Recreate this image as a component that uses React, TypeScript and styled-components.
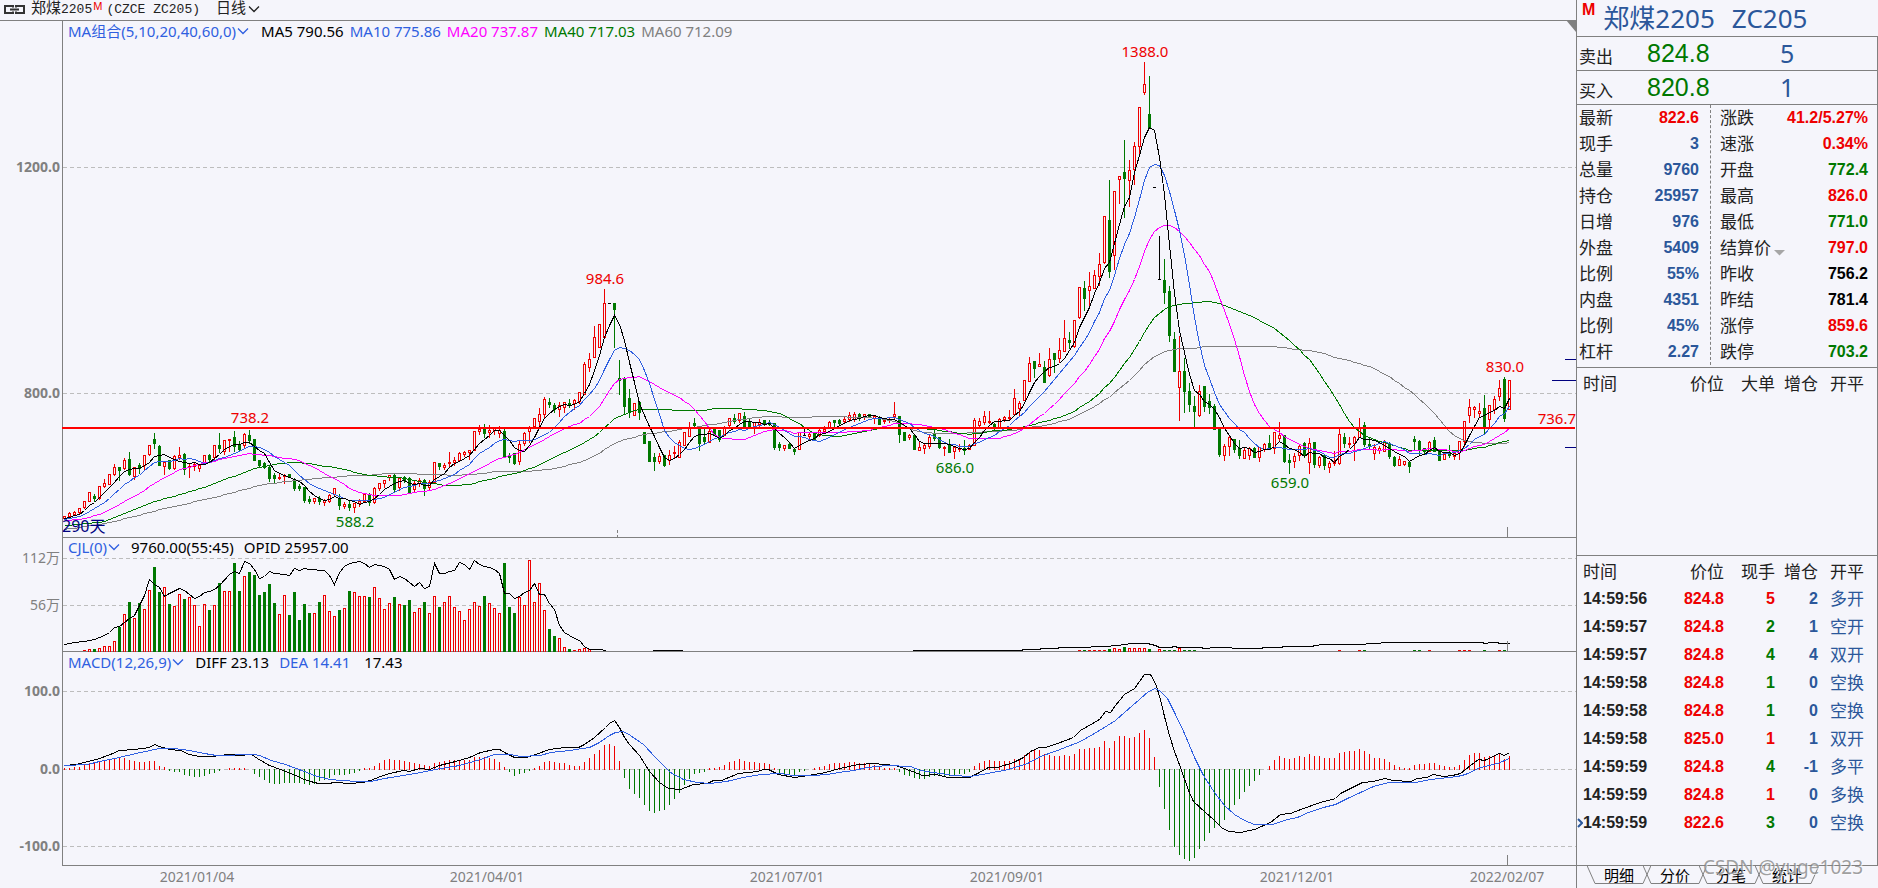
import React from 'react';
import styled, { createGlobalStyle, css } from 'styled-components';

const UP = '#ee0000';
const DOWN = '#007800';
const FLAT = '#000000';
const BLUE = '#2f5fe0';
const NAVY = '#2b579a';
const MAGENTA = '#ff00ff';
const GREY = '#808080';
const GRID = '#bdbdbd';
const BG = '#f5f5fb';
const INK = '#222222';

const UI = '"Noto Sans", "Noto Sans CJK SC", sans-serif';
const NUM = '"Liberation Sans", "Noto Sans CJK SC", sans-serif';
const MONO = '"Liberation Mono", "Noto Sans CJK SC", monospace';

const GlobalStyle = createGlobalStyle`
  * { box-sizing: border-box; }
  body { margin: 0; background: ${BG}; color: ${INK}; font-family: ${UI}; font-size: 14px; }
  button { font: inherit; color: inherit; background: none; border: 0; padding: 0; margin: 0; cursor: pointer; }
`;

/* ---------- chart data (one bar every 5 px) ---------- */

type Kind = 'u' | 'd' | 'f';
interface Candle { kind: Kind; high: number; top: number; bottom: number; low: number }

const CANDLE_SOURCE = `
u515,516,518,519 u511,513,516,517 u510,512,514,515 u507,508,512,513 u500,501,507,508 u492,492,501,501 d493,496,498,501 u485,486,498,499 u478,483,486,487 u473,474,484,484
u463,467,474,475 d466,467,470,480 u457,460,468,469 d451,459,474,475 u466,467,476,479 d462,465,468,473 u454,455,465,469 u445,445,454,455 d432,439,443,448 d444,446,465,465
u460,462,466,474 d459,460,468,469 u454,456,468,469 u446,455,457,459 d452,454,469,474 u463,466,467,477 u462,464,466,470 u463,465,468,471 u455,455,463,463 d453,455,459,462
u445,445,457,459 d432,445,448,452 u439,440,451,454 u438,439,440,451 d430,437,446,451 d440,444,449,450 u432,434,445,448 d429,435,440,443 d439,439,460,460 d459,460,465,466
d461,463,467,468 d465,467,478,481 d472,475,478,483 u473,477,478,479 u473,475,476,483 d473,474,476,477 d477,479,488,490 d483,486,488,490 d486,487,500,502 d495,499,501,503
u497,498,501,503 d495,498,501,504 u498,500,502,505 u493,495,501,502 u488,488,494,495 d493,498,505,509 u501,504,506,508 d500,504,507,510 u502,503,507,512 u498,501,503,506
u492,494,501,501 d492,495,502,505 u486,488,502,503 u483,483,488,490 u480,480,483,487 u474,475,477,480 d473,475,489,491 u477,478,487,490 d475,477,480,482 d476,478,492,492
u480,483,489,491 u477,480,483,486 d478,480,488,495 u479,482,487,489 u462,462,482,483 d463,463,466,469 u462,465,467,469 u451,462,463,466 u456,460,462,465 u451,453,460,461
u450,452,454,456 u449,450,452,459 u431,431,450,450 u424,429,431,434 d423,427,433,437 u424,430,432,437 u426,427,430,434 u425,430,433,437 d428,431,457,457 d452,455,457,462
d452,453,463,464 u439,444,461,464 u431,433,443,445 u425,428,431,442 u418,418,426,428 u407,414,421,425 u396,399,414,417 d397,402,404,407 d402,405,409,412 u401,405,409,416
u401,402,407,412 d398,403,405,407 u398,400,403,409 u391,392,401,403 u361,364,394,394 u352,359,367,371 u325,337,357,357 u323,324,347,347 u288,303,337,337 f303,303,303,303
d303,303,309,347 d359,378,380,394 d376,379,406,413 d388,398,412,417 u403,403,415,415 d400,402,412,419 d432,432,443,443 d441,441,461,461 d452,457,461,470 u452,456,461,463
d455,455,465,466 u449,455,460,464 u445,452,453,457 u439,442,457,457 u431,432,445,445 u421,427,436,436 d417,423,425,428 d425,426,443,450 d428,437,441,443 u427,431,442,442
d427,428,434,434 d429,430,439,441 u425,428,435,435 u417,418,425,427 d413,418,421,423 u412,413,420,422 d411,416,427,428 d418,422,426,427 u421,422,426,433 u418,422,424,427
d419,420,423,425 d419,422,424,425 d423,423,447,449 d441,444,447,450 u444,445,448,450 d442,444,448,448 d447,449,451,454 u432,432,449,449 f427,435,435,435 u432,434,436,440
d432,433,439,439 u427,430,435,436 u425,429,431,432 u420,422,428,428 d420,420,422,427 d418,420,423,425 u415,419,421,423 u411,415,419,421 u411,414,419,421 d412,414,417,420
u414,414,417,419 d413,414,416,417 u415,416,418,423 d415,417,424,424 u418,420,421,423 u417,419,420,422 u401,414,416,418 d416,416,434,442 d431,432,440,440 u433,435,437,439
d433,435,449,449 u440,447,450,450 u443,445,448,453 u433,437,446,448 d429,434,438,440 d437,437,447,448 u445,447,448,455 d438,445,452,452 u445,447,451,458 u443,448,449,451
d439,448,450,454 u443,445,449,449 u417,420,445,445 u417,421,425,427 u410,416,422,424 u410,421,422,423 d422,424,426,430 u417,419,427,427 u415,417,419,421 u409,417,418,420
u388,398,414,415 u400,403,408,415 u379,380,400,400 u356,363,381,381 d361,361,368,377 u352,364,366,366 d360,367,382,382 u347,359,375,376 d353,353,359,372 u337,350,358,362
u319,338,351,351 d331,340,342,348 u319,320,346,347 u287,287,317,318 d280,288,298,310 u271,286,290,305 u269,275,288,288 u252,264,276,285 u216,216,262,263 d179,220,271,277
u190,191,255,269 u175,176,179,203 d139,172,178,217 u159,170,180,206 u141,146,169,184 u107,107,146,154 u61,84,92,94 d75,114,128,128 f187,187,187,187 f235,279,279,279
d258,280,292,303 d285,291,335,341 d331,339,371,371 u335,371,387,420 d357,371,391,412 d382,391,404,411 d395,406,411,427 u384,391,415,416 d386,386,406,411 d393,401,407,413
d403,406,429,429 d427,429,454,456 u443,446,455,460 u435,437,446,455 d439,439,449,452 d439,448,455,458 u446,450,458,458 u446,448,455,459 d446,448,457,457 u446,447,457,461
u442,444,449,451 d434,443,449,449 u432,432,448,453 u421,435,438,441 d434,435,461,462 d453,460,462,473 u452,456,461,467 u444,446,455,460 d441,443,454,457 u437,443,462,473
d442,442,464,467 u455,457,465,467 d453,455,465,469 u460,463,467,472 u450,462,463,465 u428,434,463,464 d432,437,443,447 u436,443,444,447 u435,437,443,460 u417,427,437,437
d421,425,444,446 d436,444,446,449 u443,447,453,459 u445,448,450,453 u439,441,451,451 d441,443,456,458 d455,457,465,466 u455,459,465,465 u460,461,464,465 d460,462,466,472
d435,439,441,450 d439,441,449,455 d447,448,451,454 u440,442,451,451 d436,440,451,451 d450,451,460,460 u452,454,459,459 d444,452,455,457 u452,453,456,459 u441,441,452,459
u421,421,441,446 u398,407,415,422 u405,407,409,417 u402,411,413,417 d394,408,428,433 u404,405,419,426 u395,399,409,413 u379,388,396,400 d376,379,418,421 u379,380,409,409`;

const candles: Candle[] = CANDLE_SOURCE.trim().split(/\s+/).map((s) => {
  const [high, top, bottom, low] = s.slice(1).split(',').map(Number);
  return { kind: s[0] as Kind, high, top, bottom, low };
});

const VOLUMES = [
  0, 0, 0, 0, 1, 2, 2, 3, 5, 5, 10, 24, 37, 49, 33, 48, 42, 61, 84, 59, 64, 47, 45, 57, 52, 54, 46, 25, 47, 41,
  46, 68, 60, 60, 88, 60, 75, 79, 76, 56, 59, 67, 48, 37, 56, 36, 59, 31, 47, 38, 38, 49, 56, 40, 35, 41, 43, 60, 59, 55,
  55, 54, 64, 53, 42, 48, 54, 47, 46, 51, 39, 43, 49, 38, 55, 44, 49, 55, 44, 40, 31, 42, 49, 45, 55, 48, 43, 38, 88, 44,
  38, 54, 46, 91, 49, 68, 41, 22, 15, 13, 4, 2, 1, 2, 3, 2,
];
const LATE_VOLUMES: Record<number, number> = {
  203: 1, 204: 1, 205: 1, 206: 1, 207: 1, 208: 1, 209: 2, 210: 3, 211: 2, 212: 4, 213: 3, 214: 3, 215: 3, 216: 3,
  217: 2, 219: 2, 220: 1, 221: 1, 222: 1, 223: 3, 224: 1, 225: 1, 226: 1, 255: 1, 259: 1, 260: 1, 270: 1, 271: 1,
  273: 1, 279: 1, 280: 1, 281: 1, 284: 1, 287: 1, 288: 1,
};

const HISTOGRAM = [
  1, 1, 2, 2, 4, 5, 6, 8, 9, 10, 11, 12, 11, 9, 8, 7, 7, 8, 8, 3, 2, -1, -2, -2, -5, -6, -7, -7, -6, -4,
  -3, -1, 0, 1, 1, 1, 1, 0, -4, -7, -10, -13, -14, -14, -13, -13, -13, -13, -14, -15, -14, -11, -10, -8, -5, -5, -5, -4, -3, -1,
  1, 1, 3, 6, 9, 10, 9, 9, 8, 7, 6, 5, 4, 3, 6, 7, 8, 9, 9, 9, 9, 9, 12, 12, 12, 11, 10, 7, 2, -2,
  -6, -4, -3, -1, 1, 3, 7, 8, 7, 6, 6, 4, 3, 3, 7, 11, 15, 19, 24, 25, 23, 8, -8, -19, -24, -28, -35, -41, -43, -41,
  -40, -35, -29, -23, -15, -9, -4, -3, -2, 1, 1, 2, 4, 7, 8, 10, 8, 7, 7, 6, 6, 5, 1, -3, -4, -4, -5, -2, -1, 0,
  1, 2, 3, 5, 6, 6, 6, 7, 7, 6, 6, 5, 4, 2, 1, 1, 1, -2, -5, -6, -8, -9, -9, -7, -6, -6, -6, -6, -5, -4,
  -4, -2, 3, 6, 8, 9, 8, 8, 8, 8, 10, 10, 14, 17, 20, 19, 15, 14, 13, 13, 14, 13, 15, 20, 20, 21, 21, 22, 28, 21,
  28, 33, 33, 31, 32, 36, 39, 31, 12, -17, -39, -60, -77, -85, -89, -91, -88, -79, -71, -63, -58, -56, -50, -40, -35, -29, -22, -16, -11, -5,
  0, 3, 9, 13, 11, 10, 11, 13, 12, 15, 13, 13, 11, 11, 11, 16, 17, 18, 18, 20, 18, 15, 11, 11, 10, 7, 4, 2, 1, 1,
  4, 5, 5, 6, 6, 4, 3, 2, 2, 4, 9, 14, 16, 16, 12, 13, 14, 15, 10, 13,
];

const OPEN_INTEREST = [
  '64,644 74,642 84,641 94,639 104,635 109,632 114,627 119,626 124,622 129,618 134,615 139,605 144,595 149,579 154,584 159,587 164,596 169,593 179,588 184,590 189,594 194,598 199,596 204,592 209,591 214,589 219,585 229,574 234,571 239,573 244,561 249,563 254,569 259,578 264,576 269,571 274,573 284,574 289,575 294,568 299,570 304,568 309,569 324,570 329,575 334,584 339,572 344,566 349,563 354,562 359,561 364,563 369,567 374,564 384,566 389,569 394,579 399,576 404,578 409,582 414,586 419,582 424,588 429,586 434,563 439,573 444,573 449,571 454,570 459,562 464,564 469,569 474,560 479,564 484,566 489,567 494,569 499,573 504,593 509,593 514,598 519,596 524,592 529,590 534,583 539,594 544,594 549,603 554,609 559,625 564,632 569,635 574,638 579,640 584,646 589,649 599,649 606,650',
  '652,650 682,650',
  '912,650 1020,650 1024,649 1038,649 1042,648 1056,648 1060,647 1077,647 1105,646 1117,645 1131,643 1147,643 1155,645 1159,647 1170,647 1174,646 1178,647 1200,647 1204,648 1216,647 1246,648 1260,648 1264,647 1280,647 1284,646 1310,646 1322,644 1363,644 1368,643 1393,642 1481,642 1485,643 1490,642 1497,642 1499,643 1509,643',
];

const DIFF =
  '64,765 75,764 84,762 99,758 110,754 119,750 134,749 149,747 154,744 159,746 169,749 180,750 189,754 199,756 212,756 219,755 229,754 239,755 251,754 257,758 269,765 280,769 295,775 304,779 310,781 318,783 328,783 334,782 350,783 362,782 370,780 380,776 389,773 403,770 409,771 419,768 429,769 439,765 455,761 469,757 480,752 494,749 499,749 506,753 514,757 526,757 535,754 549,749 565,747 578,747 584,744 594,737 605,727 609,723 614,720 619,727 624,737 629,744 639,755 649,771 659,782 668,788 680,789 693,784 707,783 713,780 721,780 738,773 757,771 763,769 768,769 778,774 794,777 808,775 825,772 839,768 858,764 873,763 895,765 901,767 912,771 922,775 935,774 948,777 969,777 977,773 988,767 997,767 1013,762 1023,757 1030,751 1039,747 1045,747 1057,743 1073,737 1080,730 1099,719 1105,711 1110,712 1115,705 1124,694 1134,688 1139,681 1144,674 1150,674 1155,683 1160,699 1164,716 1169,735 1174,751 1180,767 1188,790 1193,801 1205,812 1214,820 1222,828 1229,831 1240,832 1254,829 1270,822 1280,814 1290,813 1303,808 1320,802 1335,798 1340,793 1350,788 1362,782 1373,781 1384,778 1393,780 1410,781 1417,778 1426,777 1433,774 1443,776 1452,775 1460,773 1470,765 1478,759 1484,760 1499,753 1504,755 1509,752';
const DEA =
  '64,765 87,764 99,761 114,758 127,755 140,752 159,748 174,748 189,750 204,753 216,755 253,754 259,755 271,760 285,764 304,771 314,775 329,779 356,781 370,781 384,778 415,773 435,769 459,765 480,759 494,754 510,754 520,756 540,755 550,752 569,750 589,747 599,742 609,735 615,732 622,731 627,733 643,744 655,757 670,772 683,779 697,782 710,783 726,781 743,777 760,774 780,773 793,775 812,775 827,774 838,772 853,770 867,767 887,765 910,766 920,770 933,772 953,775 970,776 987,773 1008,769 1027,763 1040,756 1057,750 1080,741 1099,730 1115,720 1124,712 1139,699 1148,691 1155,688 1160,691 1167,698 1174,712 1184,733 1194,757 1203,775 1214,792 1224,805 1234,814 1244,820 1254,824 1272,824 1287,819 1297,817 1308,812 1323,807 1335,804 1347,798 1360,792 1373,786 1388,782 1415,782 1430,779 1457,776 1465,774 1480,767 1497,763 1509,758';

/* ---------- chart geometry ---------- */

const FIRST_X = 64;
const STEP = 5;
const barX = (i: number) => FIRST_X + STEP * i;

const kindColor = (k: Kind) => (k === 'u' ? UP : k === 'd' ? DOWN : FLAT);

/* Moving average over the closes; the anchors give the part that precedes a full window. */
function averagePoints(window: number, anchors: [number, number][]): string {
  const closes = candles.map((c) => (c.kind === 'u' ? c.top : c.bottom));
  return closes
    .map((_, i) => {
      let y: number;
      if (i >= window - 1) {
        y = closes.slice(i - window + 1, i + 1).reduce((a, b) => a + b, 0) / window;
      } else {
        const hi = anchors.findIndex(([k]) => k >= i);
        if (hi <= 0) y = anchors[hi === 0 ? 0 : anchors.length - 1][1];
        else {
          const [k0, y0] = anchors[hi - 1];
          const [k1, y1] = anchors[hi];
          y = y0 + ((y1 - y0) * (i - k0)) / (k1 - k0);
        }
      }
      return `${barX(i)},${Math.round(y)}`;
    })
    .join(' ');
}

const MA_LINES = [
  { color: GREY, points: averagePoints(60, [[0, 529], [8, 523], [14, 516], [20, 508], [30, 497], [39, 485], [44, 481], [50, 478], [58, 475]]) },
  { color: DOWN, points: averagePoints(40, [[0, 525], [8, 521], [14, 509], [18, 501], [24, 493], [29, 485], [38, 468]]) },
  { color: MAGENTA, points: averagePoints(20, [[0, 520], [4, 518], [8, 512], [12, 501], [15, 493], [18, 483]]) },
  { color: BLUE, points: averagePoints(10, [[0, 519], [3, 516], [5, 511], [8, 502]]) },
  { color: FLAT, points: averagePoints(5, [[0, 518], [3, 514]]) },
];

/* ---------- layout ---------- */

const Screen = styled.div`
  display: grid;
  grid-template-columns: minmax(0, 1fr) 302px;
  min-height: 100vh;
`;

const ChartColumn = styled.main`
  display: grid;
  grid-template-rows: 21px minmax(517px, 1fr) 114px 214px 22px;
  min-width: 0;
`;

const TopBar = styled.header`
  display: flex;
  align-items: center;
  border-bottom: 1px solid ${GREY};
  padding: 0 0 2px 4px;
  font-family: ${MONO};
  font-size: 13px;
  line-height: 17px;
  white-space: pre;
  color: ${INK};
`;

const LinkIcon = styled.svg`
  width: 21px;
  height: 9px;
  margin-right: 6px;
`;

const HanText = styled.span`
  font-size: 15px;
`;

const MainMark = styled.sup`
  align-self: flex-start;
  font-family: ${NUM};
  font-size: 11px;
  line-height: 13px;
  color: ${UP};
  margin: 0 4px 0 1px;
  vertical-align: baseline;
`;

const PeriodButton = styled.button`
  display: flex;
  align-items: center;
  gap: 2px;
  margin-left: 16px;
`;

const Plot = styled.section`
  display: flex;
  flex-direction: column;
  min-width: 0;
  min-height: 0;
  margin-left: 62px;
  border-left: 1px solid ${GREY};
  border-bottom: 1px solid ${GREY};
`;

const Legend = styled.div<{ $height: number; $gap: number }>`
  display: flex;
  flex: none;
  align-items: center;
  gap: ${(p) => p.$gap}px;
  height: ${(p) => p.$height}px;
  padding-left: 5px;
  font-size: 15px;
  line-height: 18px;
  white-space: pre;
`;

const LegendButton = styled.button<{ $after?: number }>`
  display: flex;
  align-items: center;
  gap: 1px;
  margin-right: ${(p) => p.$after ?? 1}px;
  color: ${BLUE};
`;

const LegendItem = styled.span<{ $color: string }>`
  color: ${(p) => p.$color};
`;

const PlotSvg = styled.svg`
  display: block;
  flex: 1;
  width: 100%;
  height: 0;
  min-height: 0;
  overflow: visible;
  font-family: ${UI};
  font-size: 14px;
`;

const DateAxis = styled.svg`
  display: block;
  width: 100%;
  height: 22px;
  font-family: ${UI};
  font-size: 14px;
`;

const Sidebar = styled.aside`
  position: relative;
  display: flex;
  flex-direction: column;
  border-left: 1px solid ${GREY};
`;

const Title = styled.h1`
  display: flex;
  gap: 17px;
  height: 36px;
  margin: 0;
  padding-left: 5px;
  font-size: 26px;
  font-weight: 400;
  line-height: 36px;
  color: ${NAVY};
`;

const TitleMark = styled.span`
  align-self: flex-start;
  margin-right: -9px;
  font-family: ${NUM};
  font-size: 16px;
  font-weight: 700;
  line-height: 20px;
  color: ${UP};
`;

const box = css`
  border-top: 1px solid ${GREY};
  border-right: 1px solid ${GREY};
`;

const QuoteRow = styled.div`
  ${box}
  display: grid;
  grid-template-columns: 68px 133px 1fr;
  align-items: center;
  height: 34px;
  padding-left: 2px;
`;

const QuoteLabel = styled.span`
  padding-top: 6px;
  font-size: 17px;
  line-height: 26px;
`;

const QuotePrice = styled.span`
  font-family: ${NUM};
  font-size: 25px;
  line-height: 33px;
  color: ${DOWN};
`;

const QuoteLots = styled.span`
  font-size: 25px;
  line-height: 33px;
  color: ${NAVY};
`;

const Details = styled.dl`
  ${box}
  display: grid;
  grid-template-columns: 134px 1fr;
  margin: 0;
  padding-bottom: 2px;
`;

const DetailColumn = styled.div<{ $divided?: boolean }>`
  padding: 0 ${(p) => (p.$divided ? 11 : 9)}px 0 ${(p) => (p.$divided ? 2 : 9)}px;
  ${(p) => p.$divided && css`border-right: 1px dashed ${GREY};`}
`;

const DetailRow = styled.div`
  display: flex;
  justify-content: space-between;
  height: 26px;
`;

const DetailLabel = styled.dt`
  display: flex;
  align-items: center;
  font-size: 17px;
  line-height: 26px;
`;

const DropMark = styled.svg`
  align-self: flex-end;
  width: 14px;
  height: 6px;
  margin-bottom: 5px;
  fill: #a6a6a6;
`;

const DetailValue = styled.dd<{ $color: string }>`
  margin: 0;
  font-family: ${NUM};
  font-size: 16px;
  font-weight: 700;
  line-height: 26px;
  color: ${(p) => p.$color};
`;

const TradeSection = styled.section<{ $height?: number }>`
  ${box}
  padding-top: 2px;
  ${(p) => (p.$height ? css`height: ${p.$height}px;` : css`flex: 1; padding-bottom: 20px;`)}
`;

const TradeTable = styled.table`
  width: 100%;
  border-collapse: collapse;
  table-layout: fixed;
  white-space: nowrap;
`;

const Th = styled.th<{ $width?: number; $align?: string }>`
  ${(p) => p.$width && css`width: ${p.$width}px;`}
  height: 27px;
  padding: 0;
  font-size: 17px;
  font-weight: 400;
  line-height: 27px;
  text-align: ${(p) => p.$align ?? 'right'};
  &:first-child { padding-left: 6px; }
  &:last-child { padding-left: 12px; }
`;

const Td = styled.td<{ $color?: string; $align?: string }>`
  height: 28px;
  padding: 0;
  font-family: ${NUM};
  font-size: 16px;
  font-weight: 700;
  line-height: 28px;
  color: ${(p) => p.$color ?? INK};
  text-align: ${(p) => p.$align ?? 'right'};
  &:first-child { padding-left: 6px; }
`;

const SideTd = styled.td`
  height: 28px;
  padding: 0 0 0 12px;
  font-size: 17px;
  line-height: 28px;
  color: ${NAVY};
`;

const CurrentMark = styled.svg`
  width: 6px;
  height: 10px;
  margin-left: -6px;
  fill: none;
  stroke: ${NAVY};
  stroke-width: 2;
`;

const Tabs = styled.nav`
  display: flex;
  flex: none;
  height: 23px;
  padding-left: 10px;
  border-top: 1px solid ${GREY};
`;

const Tab = styled.button`
  position: relative;
  width: 64px;
  height: 20px;
  margin: -1px -8px 0 0;
  font-size: 15px;
  line-height: 16px;
  color: #000;
`;

const TabShape = styled.svg`
  position: absolute;
  inset: 0;
  z-index: -1;
  width: 64px;
  height: 20px;
  stroke: ${GREY};
`;

const Watermark = styled.span`
  position: absolute;
  right: 15px;
  bottom: 7px;
  font-size: 19px;
  line-height: 28px;
  white-space: nowrap;
  color: rgba(130, 130, 130, 0.75);
  text-shadow: 1px 1px 0 rgba(255, 255, 255, 0.6);
  pointer-events: none;
`;

/* ---------- pieces ---------- */

const Chevron = ({ color }: { color: string }) => (
  <svg width="12" height="8" viewBox="0 0 12 8" fill="none" stroke={color} strokeWidth="1.3">
    <path d="M1 1.5 L6 6.5 L11 1.5" />
  </svg>
);

const GridLine = ({ y }: { y: number }) => (
  <line x1="0" x2="100%" y1={y + 0.5} y2={y + 0.5} stroke={GRID} strokeDasharray="4 3" shapeRendering="crispEdges" />
);

const AxisLabel = ({ y, bold, children }: { y: number; bold?: boolean; children: string }) => (
  <text x="-3" y={y + 5} textAnchor="end" fill={GREY} fontWeight={bold ? 700 : 400}>{children}</text>
);

const Tag = ({ x, y, color, children }: { x: number; y: number; color: string; children: string }) => (
  <text x={x} y={y + 5} textAnchor="middle" fontSize="15" fill={color}>{children}</text>
);

const Line = ({ points, color }: { points: string; color: string }) => (
  <polyline points={points} fill="none" stroke={color} />
);

const DataGroup = ({ top, children }: { top: number; children: React.ReactNode }) => (
  <g transform={`translate(-62.5 ${0.5 - top})`} shapeRendering="crispEdges">{children}</g>
);

function CandleShape({ index, candle }: { index: number; candle: Candle }) {
  const x = barX(index);
  const { kind, high, top, bottom, low } = candle;
  const color = kindColor(kind);
  const rise = top - high;
  const fall = low - bottom;
  return (
    <g stroke={color} fill={kind === 'd' ? color : 'none'}>
      <path d={`M${x} ${high}v${rise}M${x} ${bottom}v${fall}`} />
      {bottom > top ? <rect x={x - 1} y={top} width="2" height={bottom - top} /> : <path d={`M${x - 1.5} ${top}h3`} />}
    </g>
  );
}

function PricePlot() {
  const top = 41;
  return (
    <Plot aria-label="K线图">
      <Legend $height={20} $gap={6}>
        <LegendButton type="button" aria-haspopup="menu" $after={6}>MA组合(5,10,20,40,60,0)<Chevron color={BLUE} /></LegendButton>
        <LegendItem $color={FLAT}>MA5 790.56</LegendItem>
        <LegendItem $color={BLUE}>MA10 775.86</LegendItem>
        <LegendItem $color={MAGENTA}>MA20 737.87</LegendItem>
        <LegendItem $color={DOWN}>MA40 717.03</LegendItem>
        <LegendItem $color={GREY}>MA60 712.09</LegendItem>
      </Legend>
      <PlotSvg>
        <GridLine y={167 - top} />
        <GridLine y={393 - top} />
        <AxisLabel y={167 - top} bold>1200.0</AxisLabel>
        <AxisLabel y={393 - top} bold>800.0</AxisLabel>
        <DataGroup top={top}>
          {candles.map((c, i) => <CandleShape key={i} index={i} candle={c} />)}
          {MA_LINES.map((m) => <Line key={m.color} {...m} />)}
          <path d="M617 529v3M617 534v3M1507 526v11" stroke={GREY} />
        </DataGroup>
        <rect x="-1" y={427 - top} width="100%" height="2" fill="#ff0000" />
        <g transform={`translate(-62 ${-top})`}>
          <Tag x={249} y={418} color={UP}>738.2</Tag>
          <Tag x={354} y={522} color={DOWN}>588.2</Tag>
          <Tag x={604} y={279} color={UP}>984.6</Tag>
          <Tag x={954} y={468} color={DOWN}>686.0</Tag>
          <Tag x={1144} y={52} color={UP}>1388.0</Tag>
          <Tag x={1289} y={483} color={DOWN}>659.0</Tag>
          <Tag x={1504} y={367} color={UP}>830.0</Tag>
          <text x="61" y="532" fontSize="16" fill="#00007f">290天</text>
        </g>
        <svg x="100%" overflow="visible">
          <path d="M-10 -21H0V-9Z" fill={GREY} />
          <path d={`M-11 ${359.5 - top}H0M-24 ${380.5 - top}H0M-11 ${447.5 - top}H0`} stroke="#00007f" />
          <text x="0" y={424 - top} textAnchor="end" fontSize="15" fill={UP}>736.7</text>
        </svg>
      </PlotSvg>
    </Plot>
  );
}

function VolumePlot() {
  const top = 556;
  const bars = candles.map((c, i) => ({
    i,
    h: VOLUMES[i] ?? LATE_VOLUMES[i] ?? 0,
    color: c.kind === 'd' ? DOWN : UP,
  }));
  return (
    <Plot aria-label="成交量">
      <Legend $height={18} $gap={10}>
        <LegendButton type="button" aria-haspopup="menu">CJL(0)<Chevron color={BLUE} /></LegendButton>
        <LegendItem $color={FLAT}>9760.00(55:45)</LegendItem>
        <LegendItem $color={FLAT}>OPID 25957.00</LegendItem>
      </Legend>
      <PlotSvg>
        <GridLine y={558 - top} />
        <GridLine y={605 - top} />
        <AxisLabel y={558 - top}>112万</AxisLabel>
        <AxisLabel y={605 - top}>56万</AxisLabel>
        <DataGroup top={top}>
          {bars.filter((b) => b.h > 0).map((b) => (
            <path
              key={b.i}
              d={b.h === 1 ? `M${barX(b.i) - 1.5} 650h3` : `M${barX(b.i) - 1} 651V${651 - b.h}h2V651`}
              stroke={b.color}
              fill={b.color === DOWN ? DOWN : 'none'}
            />
          ))}
          {OPEN_INTEREST.map((points) => <Line key={points} points={points} color={FLAT} />)}
          <path d="M1507 640v11" stroke={GREY} />
        </DataGroup>
      </PlotSvg>
    </Plot>
  );
}

function MacdPlot() {
  const top = 672;
  return (
    <Plot aria-label="MACD">
      <Legend $height={20} $gap={10}>
        <LegendButton type="button" aria-haspopup="menu">MACD(12,26,9)<Chevron color={BLUE} /></LegendButton>
        <LegendItem $color={FLAT}>DIFF 23.13</LegendItem>
        <LegendItem $color={BLUE}>DEA 14.41</LegendItem>
        <LegendItem $color={FLAT}> 17.43</LegendItem>
      </Legend>
      <PlotSvg>
        <GridLine y={691 - top} />
        <GridLine y={769 - top} />
        <GridLine y={846 - top} />
        <AxisLabel y={691 - top} bold>100.0</AxisLabel>
        <AxisLabel y={769 - top} bold>0.0</AxisLabel>
        <AxisLabel y={846 - top} bold>-100.0</AxisLabel>
        <DataGroup top={top}>
          {HISTOGRAM.map((h, i) => h !== 0 && (
            <path key={i} d={`M${barX(i)} ${h > 0 ? 769.5 : 768.5}v${-h - Math.sign(h)}`} stroke={h > 0 ? UP : DOWN} />
          ))}
          <Line points={DIFF} color={FLAT} />
          <Line points={DEA} color={BLUE} />
          <path d="M1507 854v11" stroke={GREY} />
        </DataGroup>
      </PlotSvg>
    </Plot>
  );
}

const DATES: [number, string][] = [
  [197, '2021/01/04'], [487, '2021/04/01'], [787, '2021/07/01'], [1007, '2021/09/01'], [1297, '2021/12/01'], [1507, '2022/02/07'],
];

/* ---------- sidebar data ---------- */

type Detail = [label: string, value: string, color: string];

const LEFT_DETAILS: Detail[] = [
  ['最新', '822.6', UP], ['现手', '3', NAVY], ['总量', '9760', NAVY], ['持仓', '25957', NAVY], ['日增', '976', NAVY],
  ['外盘', '5409', NAVY], ['比例', '55%', NAVY], ['内盘', '4351', NAVY], ['比例', '45%', NAVY], ['杠杆', '2.27', NAVY],
];
const RIGHT_DETAILS: Detail[] = [
  ['涨跌', '41.2/5.27%', UP], ['速涨', '0.34%', UP], ['开盘', '772.4', DOWN], ['最高', '826.0', UP], ['最低', '771.0', DOWN],
  ['结算价', '797.0', UP], ['昨收', '756.2', FLAT], ['昨结', '781.4', FLAT], ['涨停', '859.6', UP], ['跌停', '703.2', DOWN],
];

interface Trade { time: string; price: string; lots: string; color: string; delta: string; side: string }
const TRADES: Trade[] = [
  { time: '14:59:56', price: '824.8', lots: '5', color: UP, delta: '2', side: '多开' },
  { time: '14:59:57', price: '824.8', lots: '2', color: DOWN, delta: '1', side: '空开' },
  { time: '14:59:57', price: '824.8', lots: '4', color: DOWN, delta: '4', side: '双开' },
  { time: '14:59:58', price: '824.8', lots: '1', color: DOWN, delta: '0', side: '空换' },
  { time: '14:59:58', price: '824.8', lots: '1', color: DOWN, delta: '0', side: '空换' },
  { time: '14:59:58', price: '825.0', lots: '1', color: UP, delta: '1', side: '双开' },
  { time: '14:59:59', price: '824.8', lots: '4', color: DOWN, delta: '-1', side: '多平' },
  { time: '14:59:59', price: '824.8', lots: '1', color: UP, delta: '0', side: '多换' },
  { time: '14:59:59', price: '822.6', lots: '3', color: DOWN, delta: '0', side: '空换' },
];

function DetailList({ items, divided }: { items: Detail[]; divided?: boolean }) {
  return (
    <DetailColumn $divided={divided}>
      {items.map(([label, value, color], i) => (
        <DetailRow key={i}>
          <DetailLabel>
            {label}
            {label === '结算价' && <DropMark viewBox="0 0 14 6"><path d="M3 0H14L8.5 5.5Z" /></DropMark>}
          </DetailLabel>
          <DetailValue $color={color}>{value}</DetailValue>
        </DetailRow>
      ))}
    </DetailColumn>
  );
}

const TradeHead = ({ lots }: { lots: string }) => (
  <thead>
    <tr>
      <Th $width={80} $align="left">时间</Th>
      <Th $width={67}>价位</Th>
      <Th $width={51}>{lots}</Th>
      <Th $width={43}>增仓</Th>
      <Th $align="left">开平</Th>
    </tr>
  </thead>
);

export default function App() {
  return (
    <Screen>
      <GlobalStyle />
      <ChartColumn>
        <TopBar>
          <LinkIcon viewBox="0 0 21 9" fill="none" stroke="#333" strokeWidth="2">
            <path d="M9 2.5V1H1V8H9V6.5M12 2.5V1H20V8H12V6.5M6 4.5H15" />
          </LinkIcon>
          <HanText>郑煤</HanText>2205
          <MainMark>M</MainMark>
          (CZCE ZC205)
          <PeriodButton type="button" aria-haspopup="menu"><HanText>日线</HanText><Chevron color={INK} /></PeriodButton>
        </TopBar>
        <PricePlot />
        <VolumePlot />
        <MacdPlot />
        <DateAxis>
          {DATES.map(([x, d]) => <text key={d} x={x} y="16" textAnchor="middle" fill={GREY}>{d}</text>)}
        </DateAxis>
      </ChartColumn>

      <Sidebar>
        <Title><TitleMark>M</TitleMark><span>郑煤2205</span><span>ZC205</span></Title>
        <QuoteRow><QuoteLabel>卖出</QuoteLabel><QuotePrice>824.8</QuotePrice><QuoteLots>5</QuoteLots></QuoteRow>
        <QuoteRow><QuoteLabel>买入</QuoteLabel><QuotePrice>820.8</QuotePrice><QuoteLots>1</QuoteLots></QuoteRow>
        <Details>
          <DetailList items={LEFT_DETAILS} divided />
          <DetailList items={RIGHT_DETAILS} />
        </Details>
        <TradeSection $height={188}>
          <TradeTable><TradeHead lots="大单" /></TradeTable>
        </TradeSection>
        <TradeSection>
          <TradeTable>
            <TradeHead lots="现手" />
            <tbody>
              {TRADES.map((t, i) => (
                <tr key={i}>
                  <Td $align="left">
                    {i === TRADES.length - 1 && <CurrentMark viewBox="0 0 6 10"><path d="M1 1L5 5L1 9" /></CurrentMark>}
                    {t.time}
                  </Td>
                  <Td $color={UP}>{t.price}</Td>
                  <Td $color={t.color}>{t.lots}</Td>
                  <Td $color={NAVY}>{t.delta}</Td>
                  <SideTd>{t.side}</SideTd>
                </tr>
              ))}
            </tbody>
          </TradeTable>
        </TradeSection>
        <Tabs>
          {['明细', '分价', '分笔', '统计'].map((name, i) => (
            <Tab key={name} type="button">
              <TabShape viewBox="0 0 64 20" fill={i === 0 ? BG : 'none'}>
                <path d="M0 0.5L8 18.5H56L64 0.5" />
              </TabShape>
              {name}
            </Tab>
          ))}
        </Tabs>
        <Watermark>CSDN @yuge1023</Watermark>
      </Sidebar>
    </Screen>
  );
}
